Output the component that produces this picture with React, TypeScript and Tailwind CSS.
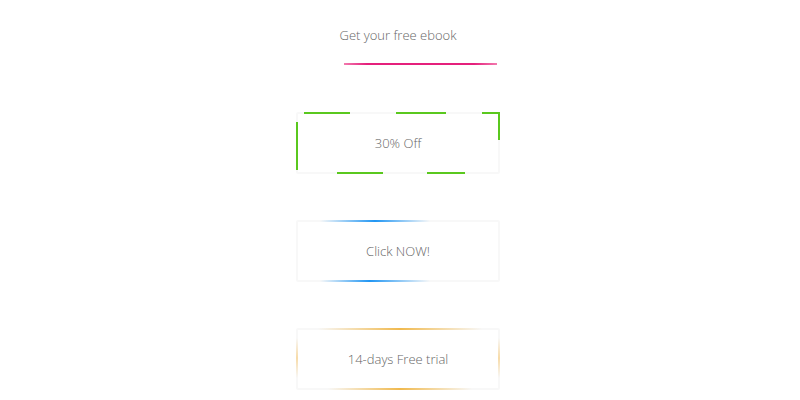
import React from "react";

export default function App() {
  return (
    <div className="w-[800px] h-[400px] bg-white flex justify-center pr-[4px] pt-[4px]" style={{ fontFamily: '"Open Sans", "Liberation Sans", sans-serif' }}>
      <div className="flex flex-col gap-[46px] w-[204px]">
        {/* Box 1 */}
        <div className="relative h-[62px] flex items-center justify-center pt-[1px] text-[13px] font-light text-[#666]">
          <span>Get your free ebook</span>
          <div className="absolute left-[48px] top-[59px] w-[153px] h-[2px] bg-[linear-gradient(to_right,#f27aae,#e5207c_15%,#e5207c_85%,#f27aae)]" />
        </div>

        {/* Box 2 */}
        <div className="relative h-[62px] border-2 border-[#f8f8f8] rounded-[2px] flex items-center justify-center pt-[2px] text-[13px] font-light text-[#666]">
          <span>30% Off</span>
          <div className="absolute -top-[2px] left-[6px] w-[46px] h-[2px] bg-[#5ac81e]" />
          <div className="absolute -top-[2px] left-[98px] w-[50px] h-[2px] bg-[#5ac81e]" />
          <div className="absolute -top-[2px] left-[184px] w-[18px] h-[2px] bg-[#5ac81e]" />
          <div className="absolute -top-[2px] -right-[2px] w-[2px] h-[28px] bg-[#5ac81e]" />
          <div className="absolute top-[8px] -left-[2px] w-[2px] h-[48px] bg-[#5ac81e]" />
          <div className="absolute -bottom-[2px] left-[39px] w-[46px] h-[2px] bg-[#5ac81e]" />
          <div className="absolute -bottom-[2px] left-[129px] w-[38px] h-[2px] bg-[#5ac81e]" />
        </div>

        {/* Box 3 */}
        <div className="relative h-[62px] border-2 border-[#f8f8f8] rounded-[2px] flex items-center justify-center pt-[2px] text-[13px] font-light text-[#666]">
          <span>Click NOW!</span>
          <div className="absolute -top-[2px] left-[22px] w-[110px] h-[2px] bg-[linear-gradient(to_right,rgba(33,150,243,0),#2196f3_50%,rgba(33,150,243,0))]" />
          <div className="absolute -bottom-[2px] left-[22px] w-[110px] h-[2px] bg-[linear-gradient(to_right,rgba(33,150,243,0),#2196f3_45%,rgba(33,150,243,0))]" />
        </div>

        {/* Box 4 */}
        <div className="relative h-[62px] border-2 border-[#f8f8f8] rounded-[2px] flex items-center justify-center pt-[2px] text-[13px] font-light text-[#666]">
          <span>14-days Free trial</span>
          <div className="absolute -top-[2px] left-[20px] w-[164px] h-[2px] bg-[linear-gradient(to_right,rgba(240,185,80,0),#f0b94e_50%,rgba(240,185,80,0))]" />
          <div className="absolute -bottom-[2px] left-[30px] w-[144px] h-[2px] bg-[linear-gradient(to_right,rgba(240,185,80,0),#f0b94e_50%,rgba(240,185,80,0))]" />
          <div className="absolute top-[8px] -left-[2px] w-[2px] h-[40px] bg-[linear-gradient(to_bottom,rgba(240,185,80,0),#f7dba8_50%,rgba(240,185,80,0))]" />
          <div className="absolute top-[8px] -right-[2px] w-[2px] h-[40px] bg-[linear-gradient(to_bottom,rgba(240,185,80,0),#f7dba8_50%,rgba(240,185,80,0))]" />
        </div>
      </div>
    </div>
  );
}
